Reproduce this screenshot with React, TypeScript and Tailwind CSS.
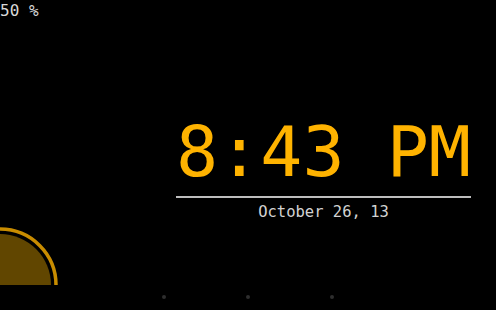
import React from "react";

const mono = "font-['DejaVu_Sans_Mono','Liberation_Mono',monospace]";

function Dial() {
  return (
    <svg width="62" height="62" viewBox="0 0 62 62" className="block">
      <path d="M0 11 A51 51 0 0 1 51 62 L0 62 Z" fill="#614600" />
      <path d="M0 6 A56 56 0 0 1 56 62" fill="none" stroke="#c88c00" strokeWidth="3.5" />
    </svg>
  );
}

function NavDots() {
  return (
    <div className="h-[25px] flex items-center justify-center gap-[80px] pb-[1px]">
      <div className="w-[4px] h-[4px] rounded-full bg-[#2e2e2e]" />
      <div className="w-[4px] h-[4px] rounded-full bg-[#2e2e2e]" />
      <div className="w-[4px] h-[4px] rounded-full bg-[#2e2e2e]" />
    </div>
  );
}

export default function App() {
  return (
    <div className={`w-[496px] h-[310px] bg-black overflow-hidden ${mono}`}>
      <div className="h-[285px] flex flex-col overflow-hidden">
        <div className="text-[16px] leading-[22px] text-[#d8d8d8] whitespace-pre">50 %</div>

        <div className="self-end mr-[25px] mt-[95px] flex flex-col">
          <div className="text-[70px] leading-[70px] text-[#ffb300] whitespace-pre">8:43 PM</div>
          <div className="h-[2px] bg-[#bdbdbd] mt-[9px]" />
          <div className="text-[15.5px] leading-[18px] text-[#d2d2d2] text-center mt-[5px]">
            October 26, 13
          </div>
        </div>

        <div className="mt-auto">
          <Dial />
        </div>
      </div>
      <NavDots />
    </div>
  );
}
